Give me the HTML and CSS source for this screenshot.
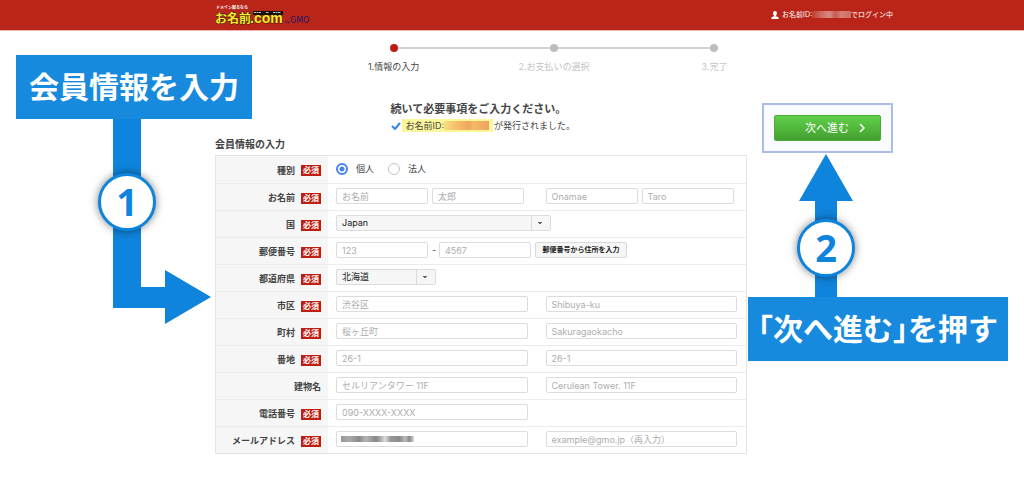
FILE: index.html
```html
<!DOCTYPE html>
<html lang="ja">
<head>
<meta charset="utf-8">
<meta name="viewport" content="width=device-width, initial-scale=1">
<title>会員情報の入力</title>
<link rel="stylesheet" href="styles.css">
</head>
<body>
<header class="header">
  <svg class="logo" viewBox="0 0 98 22" role="img" aria-label="お名前.com by GMO">
    <text class="logo-tag" x="1" y="5">ドメイン取るなら</text>
    <rect x="38" y="7" width="30" height="4" fill="#111"/>
    <text class="logo-name" x="0" y="19">お名前</text>
    <text class="logo-com" x="35" y="19">.com</text>
    <path d="M39 8.500h7M51 8.500h3M58 8.500h8" stroke="#c9c9c9" stroke-width="1" stroke-dasharray="2 .5"/>
    <text class="logo-by" x="70" y="19">by</text>
    <text class="logo-gmo" x="75" y="19">GMO</text>
  </svg>
  <p class="login">
    <svg class="user-icon" viewBox="0 0 8 8" aria-hidden="true"><path fill="#fff" d="M4 0C2.800 0 2.100.9 2.100 2.200c0 1 .4 1.900 1 2.400v.7L1 6.100C.5 6.400.3 7 .3 8h7.400c0-1-.2-1.600-.7-1.900l-2.100-.8v-.7c.6-.5 1-1.400 1-2.400C5.900.9 5.200 0 4 0z"/></svg>
    <span>お名前ID:</span><span class="mask mask-header"></span><span>でログイン中</span>
  </p>
</header>

<main class="page">
  <ol class="steps">
    <li class="step current">1.情報の入力</li>
    <li class="step">2.お支払いの選択</li>
    <li class="step">3.完了</li>
  </ol>

  <div class="columns">
    <form class="member" id="member">
      <div class="intro">
        <h1 class="lead">続いて必要事項をご入力ください。</h1>
        <p class="issued">
          <svg class="check" viewBox="0 0 10 8" aria-hidden="true"><path d="M1 4l3 3 5-6" fill="none" stroke="#3b82f0" stroke-width="2"/></svg>
          <span class="issued-id">お名前ID:<span class="mask mask-id"></span></span>
          <span>が発行されました。</span>
        </p>
      </div>
      <h2 class="section-title">会員情報の入力</h2>
      <div class="rows">
        <div class="row" role="radiogroup" aria-labelledby="type-label">
          <div class="label"><span id="type-label">種別</span><span class="req">必須</span></div>
          <div class="fields radios">
            <label class="radio"><input type="radio" name="type" checked>個人</label>
            <label class="radio"><input type="radio" name="type">法人</label>
          </div>
        </div>
        <div class="row">
          <div class="label"><label for="sei">お名前</label><span class="req">必須</span></div>
          <div class="fields">
            <div class="pair"><input class="box short" id="sei" placeholder="お名前"><input class="box short" placeholder="太郎" aria-label="名"></div>
            <div class="pair"><input class="box short" placeholder="Onamae" aria-label="姓（ローマ字）"><input class="box short" placeholder="Taro" aria-label="名（ローマ字）"></div>
          </div>
        </div>
        <div class="row">
          <div class="label"><label for="country">国</label><span class="req">必須</span></div>
          <div class="fields inline"><select class="box select country" id="country"><option>Japan</option></select></div>
        </div>
        <div class="row">
          <div class="label"><label for="zip">郵便番号</label><span class="req">必須</span></div>
          <div class="fields inline">
            <input class="box short" id="zip" placeholder="123"><span class="dash">-</span><input class="box short" placeholder="4567" aria-label="郵便番号 下4桁"><button class="zip-button" type="button">郵便番号から住所を入力</button>
          </div>
        </div>
        <div class="row">
          <div class="label"><label for="pref">都道府県</label><span class="req">必須</span></div>
          <div class="fields inline"><select class="box select pref" id="pref"><option>北海道</option></select></div>
        </div>
        <div class="row">
          <div class="label"><label for="city">市区</label><span class="req">必須</span></div>
          <div class="fields"><input class="box" id="city" placeholder="渋谷区"><input class="box" placeholder="Shibuya-ku" aria-label="市区（ローマ字）"></div>
        </div>
        <div class="row">
          <div class="label"><label for="town">町村</label><span class="req">必須</span></div>
          <div class="fields"><input class="box" id="town" placeholder="桜ヶ丘町"><input class="box" placeholder="Sakuragaokacho" aria-label="町村（ローマ字）"></div>
        </div>
        <div class="row">
          <div class="label"><label for="street">番地</label><span class="req">必須</span></div>
          <div class="fields"><input class="box" id="street" placeholder="26-1"><input class="box" placeholder="26-1" aria-label="番地（ローマ字）"></div>
        </div>
        <div class="row">
          <div class="label"><label for="building">建物名</label></div>
          <div class="fields"><input class="box" id="building" placeholder="セルリアンタワー 11F"><input class="box" placeholder="Cerulean Tower. 11F" aria-label="建物名（ローマ字）"></div>
        </div>
        <div class="row">
          <div class="label"><label for="tel">電話番号</label><span class="req">必須</span></div>
          <div class="fields"><input class="box" id="tel" type="tel" placeholder="090-XXXX-XXXX"></div>
        </div>
        <div class="row">
          <div class="label"><label for="mail">メールアドレス</label><span class="req">必須</span></div>
          <div class="fields"><input class="box masked" id="mail" type="email"><input class="box" type="email" placeholder="example@gmo.jp（再入力）" aria-label="メールアドレス（再入力）"></div>
        </div>
      </div>
    </form>

    <aside class="side">
      <button class="next" type="submit" form="member">次へ進む
        <svg class="chevron" viewBox="0 0 6 10" aria-hidden="true"><path d="M1 1l4 4-4 4" fill="none" stroke="#fff" stroke-width="1.500"/></svg>
      </button>
    </aside>
  </div>
</main>

<div class="guide guide-1">
  <p class="guide-title">会員情報を入力</p>
  <svg class="guide-arrow" viewBox="0 0 195 206" aria-hidden="true"><path fill="#0f84dc" d="M97 0h28v168h24v-17l46 27-46 27v-16H97z"/></svg>
  <span class="badge">1</span>
</div>
<div class="guide guide-2">
  <svg class="guide-arrow" viewBox="0 0 54 143" aria-hidden="true"><path fill="#0f84dc" d="M27 0l27 47H38v96H16V47H0z"/></svg>
  <p class="guide-title">「次へ進む」を押す</p>
  <span class="badge">2</span>
</div>
</body>
</html>
```
FILE: styles.css
```css
* {
  box-sizing: border-box;
}

body {
  position: relative;
  margin: 0;
  background: #fff;
  color: #444;
  font-family: Inter, "Noto Sans CJK JP", sans-serif;
  font-size: 9px;
  line-height: 12px;
}

h1, h2, p, ol {
  margin: 0;
  padding: 0;
}

input, select, button {
  margin: 0;
  font: inherit;
  color: inherit;
}

.header {
  display: flex;
  justify-content: space-between;
  align-items: center;
  height: 31px;
  padding: 0 131px 1px 215px;
  background: #b92619;
  border-bottom: 1px solid #eab5ac;
}

.logo {
  width: 98px;
  height: 22px;
}

.logo-tag {
  font: bold 4px "Noto Sans CJK JP", sans-serif;
  fill: #fff;
}

.logo-name,
.logo-com {
  font: bold 12px "Noto Sans CJK JP", sans-serif;
  fill: #f6ee2c;
  stroke: #3a1a0c;
  stroke-width: 1px;
  paint-order: stroke;
}

.logo-com {
  font: bold 14px "Liberation Sans", sans-serif;
}

.logo-by {
  font: 4px "Liberation Sans", sans-serif;
  fill: #231a63;
}

.logo-gmo {
  font: 8px "DejaVu Sans", sans-serif;
  fill: #231a63;
}

.login {
  display: flex;
  align-items: center;
  color: #fff;
  font-size: 7px;
}

.user-icon {
  width: 8px;
  height: 8px;
  margin-right: 3px;
}

.mask {
  height: 7px;
}

.mask-header {
  width: 39px;
  background: linear-gradient(90deg, #bf3c30, #cf6f66 25%, #d88981 45%, #c75a50 60%, #d67f77 75%, #cf6f66);
}

.mask-id {
  width: 45px;
  height: 9px;
  background: linear-gradient(90deg, #f8df80, #f4b765 35%, #efa65f 55%, #f5b965 65%, #eea25f);
}

.page {
  padding: 13px 131px 43px 215px;
}

.steps {
  display: grid;
  grid-template-columns: repeat(3, 1fr);
  width: 71%;
  margin: 0 auto;
  list-style: none;
}

.step {
  position: relative;
  padding-top: 17px;
  color: #c4c4c4;
  text-align: center;
}

.step::before {
  content: "";
  position: absolute;
  top: 0;
  left: 50%;
  z-index: 1;
  width: 8px;
  height: 8px;
  border-radius: 50%;
  background: #bdbdbd;
  transform: translateX(-50%);
}

.step + .step::after {
  content: "";
  position: absolute;
  top: 3px;
  right: 50%;
  width: 100%;
  height: 2px;
  background: #d2d2d2;
}

.current {
  color: #444;
}

.current::before {
  background: #bf1d12;
}

.columns {
  display: flex;
  align-items: flex-start;
  gap: 15px;
  padding-top: 30px;
}

.member {
  flex: 1;
  margin-top: -2px;
}

.intro {
  padding-left: 33%;
}

.lead {
  font-size: 11px;
  font-weight: bold;
  line-height: 16px;
}

.issued {
  display: flex;
  align-items: center;
  gap: 1px;
  padding-top: 2px;
}

.check {
  width: 10px;
  height: 8px;
}

.issued-id {
  display: flex;
  align-items: center;
  height: 13px;
  padding: 0 4px;
  background: #fdf79b;
}

.section-title {
  padding: 6px 0 5px;
  font-size: 10px;
  font-weight: bold;
  line-height: 12px;
}

.rows {
  border: 1px solid #e4e4e4;
}

.row {
  display: grid;
  grid-template-columns: 112px 1fr;
  height: 27px;
}

.row + .row {
  border-top: 1px solid #ececec;
}

.label {
  display: flex;
  align-items: center;
  justify-content: flex-end;
  gap: 6px;
  padding: 2px 7px 0 0;
  background: #f6f6f6;
  font-weight: bold;
}

.req {
  width: 20px;
  background: #bf1d12;
  color: #fff;
  font-size: 8px;
  line-height: 11px;
  text-align: center;
}

.fields {
  display: grid;
  grid-template-columns: 1fr 1fr;
  align-items: center;
  gap: 18px;
  padding: 0 9px 2px 8px;
}

.pair {
  display: flex;
  gap: 4px;
}

.inline,
.radios {
  display: flex;
  gap: 4px;
}

.radios {
  gap: 14px;
}

.radio {
  display: flex;
  align-items: center;
  gap: 8px;
}

.radio input {
  width: 12px;
  height: 12px;
  appearance: none;
  border: 1px solid #c4c4c4;
  border-radius: 50%;
}

.radio input:checked {
  border: 2px solid #4a80ee;
  background: radial-gradient(circle, #4a80ee 2px, #fff 3px);
}

.box {
  width: 100%;
  min-width: 0;
  height: 16px;
  padding: 0 5px;
  border: 1px solid #dcdcdc;
  border-radius: 2px;
  background: #fff;
  line-height: 14px;
}

.box::placeholder {
  color: #adadad;
  opacity: 1;
}

.short {
  width: 92px;
}

.select {
  appearance: none;
  color: #222;
  background:
    linear-gradient(#666, #666) right 8px top 6px / 4px 1px no-repeat,
    linear-gradient(#666, #666) right 9px top 7px / 2px 1px no-repeat,
    linear-gradient(#d9d9d9, #d9d9d9) right 18px top / 1px 100% no-repeat,
    #f6f6f6;
}

.country {
  width: 215px;
}

.pref {
  width: 100px;
}

.dash {
  width: 3px;
}

.zip-button {
  width: 92px;
  height: 16px;
  padding: 0;
  border: 1px solid #d9d9d9;
  border-radius: 2px;
  background: #f6f6f6;
  color: #222;
  font-size: 7px;
  font-weight: bold;
  line-height: 14px;
  white-space: nowrap;
}

.masked {
  background:
    linear-gradient(90deg, #999, #aaa 12%, #8a8a8a 25%, #b5b5b5 34%, #888 48%, #aaa 54%, #ddd 60%, #999 68%, #8a8a8a 80%, #bbb 88%, #888 94%, #ddd) 4px 4px / 73px 6px no-repeat,
    #fff;
}

.side {
  width: 131px;
  padding: 10px;
  border: 2px solid #a9bde8;
  background: #f9fbff;
}

.next {
  display: flex;
  align-items: center;
  justify-content: flex-end;
  gap: 10px;
  width: 100%;
  height: 26px;
  padding: 0 15px 0 0;
  border: 1px solid #4aa838;
  border-radius: 2px;
  background: linear-gradient(#5fd049, #43a02f);
  color: #fff;
  font-size: 11px;
}

.chevron {
  width: 6px;
  height: 10px;
}

.guide {
  position: absolute;
}

.guide-1 {
  top: 55px;
  left: 16px;
}

.guide-2 {
  top: 154px;
  left: 748px;
}

.guide-title {
  padding: 0 13px 4px;
  background: #188ade;
  color: #fff;
  font-family: "Noto Sans CJK JP", sans-serif;
  font-size: 30px;
  font-weight: bold;
  font-feature-settings: "halt";
  line-height: 60px;
  white-space: nowrap;
}

.guide-2 .guide-title {
  padding: 0 10px 4px;
}

.guide-arrow {
  display: block;
}

.guide-1 .guide-arrow {
  width: 195px;
  height: 206px;
}

.guide-2 .guide-arrow {
  width: 54px;
  height: 143px;
  margin-left: 51px;
}

.badge {
  position: absolute;
  width: 58px;
  height: 58px;
  border: 3px solid #0f84dc;
  border-radius: 50%;
  background: #fff;
  box-shadow: 0 0 8px rgba(0, 0, 0, 0.5);
  color: #0f84dc;
  font-family: "Noto Sans", sans-serif;
  font-size: 38px;
  font-weight: bold;
  line-height: 50px;
  text-align: center;
}

.guide-1 .badge {
  top: 118px;
  left: 82px;
}

.guide-2 .badge {
  top: 65px;
  left: 49px;
}
```
